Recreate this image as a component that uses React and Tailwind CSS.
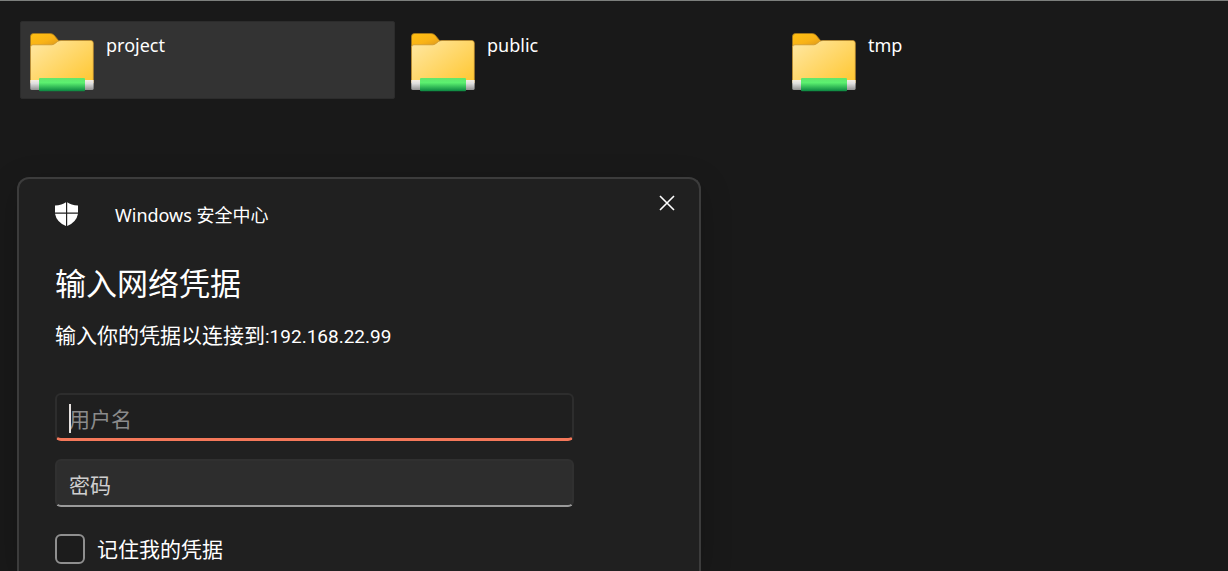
import React from "react";

function DriveFolderIcon() {
  return (
    <svg width="64" height="59" viewBox="0 0 64 59" className="shrink-0" aria-hidden="true">
      <defs>
        <linearGradient id="tab" x1="0" y1="0" x2="0.8" y2="1">
          <stop offset="0" stopColor="#ffc012" />
          <stop offset="0.6" stopColor="#f9b317" />
          <stop offset="1" stopColor="#dd9a1c" />
        </linearGradient>
        <linearGradient id="front" x1="0" y1="0" x2="1" y2="0.9">
          <stop offset="0" stopColor="#ffe8a4" />
          <stop offset="1" stopColor="#ffc835" />
        </linearGradient>
        <linearGradient id="pipe" x1="0" y1="0" x2="0" y2="1">
          <stop offset="0" stopColor="#f6efe6" />
          <stop offset="0.35" stopColor="#dedede" />
          <stop offset="1" stopColor="#919191" />
        </linearGradient>
        <linearGradient id="cable" x1="0" y1="0" x2="0" y2="1">
          <stop offset="0" stopColor="#62e56c" />
          <stop offset="0.35" stopColor="#5cf070" />
          <stop offset="1" stopColor="#0a8540" />
        </linearGradient>
      </defs>
      <path d="M0.500 14V3.500Q0.500 0.500 3.500 0.500H20Q22.500 0.500 24.200 2.200L28.500 7.500V14Z" fill="url(#tab)" stroke="#a87a1c" strokeWidth="0.800" />
      <path d="M0.500 50V14Q0.500 11.800 3 11.800H21.500Q23.500 11.800 25 10.500L27.500 8.500Q29 7.500 31 7.500H61Q63.300 7.500 63.300 10V50Z" fill="url(#front)" stroke="#c6912b" strokeWidth="0.700" />
      <path d="M0.300 47H63.600V55.500Q63.600 57 62 57H2Q0.300 57 0.300 55.500Z" fill="url(#pipe)" />
      <rect x="9" y="45" width="46" height="13.300" rx="1" fill="url(#cable)" />
    </svg>
  );
}

function ShieldIcon() {
  return (
    <svg width="24" height="25" viewBox="0 0 24 25" className="shrink-0" aria-hidden="true">
      <path
        d="M0 3.500Q7 3.300 11 0.300V10.500H0ZM12.200 0.300Q16 3.300 23 3.500V10.500H12.200ZM0 11.700H11V24Q1.500 20 0 11.700ZM12.200 11.700H23Q21.500 20 12.200 24Z"
        fill="#fff"
      />
    </svg>
  );
}

function Folder({ name, selected }) {
  return (
    <li>
      <button
        type="button"
        className={
          "flex w-full items-start gap-3 rounded-xs border px-[9px] pt-[11px] pb-[6px] text-left " +
          (selected ? "border-[#2c2c2c] bg-[#333333]" : "border-transparent")
        }
      >
        <DriveFolderIcon />
        <span className="text-[18px] leading-6 text-white">{name}</span>
      </button>
    </li>
  );
}

export default function App() {
  const folders = ["project", "public", "tmp"];
  return (
    <main className="flex h-screen flex-col overflow-hidden border-t border-[#7c7f7d] bg-[#191919] font-['Noto_Sans','Noto_Sans_CJK_SC',sans-serif] text-white">
      <ul className="grid grid-cols-3 gap-1.5 pt-5 pr-[71px] pl-5">
        {folders.map((name, i) => (
          <Folder key={name} name={name} selected={i === 0} />
        ))}
      </ul>

      <section
        role="dialog"
        aria-labelledby="dialog-title"
        className="mt-[78px] ml-[17px] w-full max-w-[684px] flex-1 rounded-t-xl border-2 border-b-0 border-[#3c3c3c] bg-[#202020] pt-2.5 pr-[18px] pl-9 shadow-[0_8px_32px_rgba(0,0,0,0.2)]"
      >
        <header className="flex items-start justify-between">
          <div className="flex items-center gap-9 pt-[13px]">
            <ShieldIcon />
            <span className="text-[18px] leading-6">Windows 安全中心</span>
          </div>
          <button type="button" aria-label="Close" className="flex size-7 items-center justify-center">
            <svg width="16" height="16" viewBox="0 0 16 16" aria-hidden="true">
              <path d="M1 1L15 15M15 1L1 15" stroke="#fff" strokeWidth="1.600" />
            </svg>
          </button>
        </header>

        <h1 id="dialog-title" className="mt-9 text-[31px] leading-10">
          输入网络凭据
        </h1>
        <p className="mt-4 text-[21px] leading-8">
          输入你的凭据以连接到<span className="font-['Roboto',sans-serif] text-[19px]">:192.168.22.99</span>
        </p>

        <form className="mt-10 flex w-full max-w-[519px] flex-col">
          <div className="relative">
            <input
              type="text"
              aria-label="用户名"
              placeholder="用户名"
              className="block h-12 w-full rounded-md border-2 border-b-3 border-[#2d2d2d] border-b-[#f5785a] bg-[#1f1f1f] px-3 pt-1 text-[21px] leading-8 text-white outline-none placeholder:text-[#8b8b8b]"
            />
            <span className="absolute top-[11px] left-[14px] h-[29px] w-0.5 bg-[#e6e1df]" />
          </div>
          <input
            type="password"
            aria-label="密码"
            placeholder="密码"
            className="mt-[18px] block h-12 w-full rounded-md border-2 border-[#303030] border-b-[#9a9a9a] bg-[#2d2d2d] px-3 pt-1 text-[21px] leading-8 text-white outline-none placeholder:text-[#cfcfcf]"
          />
          <label className="mt-[26px] flex items-center gap-3 text-[21px] leading-8">
            <input
              type="checkbox"
              className="size-[30px] shrink-0 appearance-none rounded-md border-2 border-[#8f8f8f] bg-[#1c1c1c]"
            />
            记住我的凭据
          </label>
        </form>
      </section>
    </main>
  );
}
